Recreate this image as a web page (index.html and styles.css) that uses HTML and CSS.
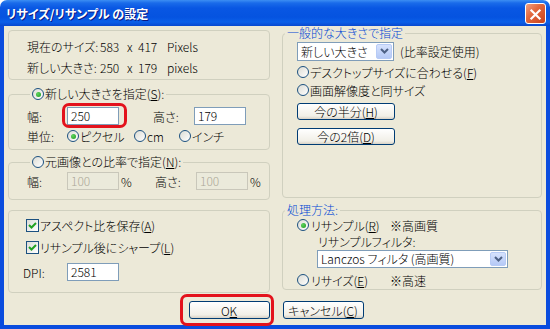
FILE: index.html
```html
<!DOCTYPE html>
<html lang="ja">
  <head>
    <meta charset="UTF-8" />
    <title>リサイズ/リサンプル の設定</title>
    <link rel="stylesheet" href="styles.css">
  </head>
  <body>
    <div class="window">
      <div class="titlebar">
        <span class="title">リサイズ/リサンプル の設定</span>
        <span class="close">
          <svg viewBox="0 0 21 21" width="21" height="21">
            <path d="M6 6 L15 15 M15 6 L6 15" stroke="#fff" stroke-width="2.4" stroke-linecap="square"/>
          </svg>
        </span>
      </div>

      <div class="client">
        <div class="columns">
          <!-- left column -->
          <div class="col">
            <div class="box info">
              <div class="info-row">
                <span class="info-label">現在のサイズ:</span><span class="n1">583</span><span class="x">x</span><span class="n2">417</span><span>Pixels</span>
              </div>
              <div class="info-row">
                <span class="info-label">新しい大きさ:</span><span class="n1">250</span><span class="x">x</span><span class="n2">179</span><span>pixels</span>
              </div>
            </div>

            <div class="group g-new">
              <div class="legend legend-left"><span class="radio on"></span>新しい大きさを指定(<u>S</u>):</div>
              <div class="row first">
                <span class="lbl">幅:</span>
                <span class="mark mark-edit"><span class="edit">250</span></span>
                <span class="lbl lbl-h">高さ:</span>
                <span class="edit">179</span>
              </div>
              <div class="row">
                <span class="lbl">単位:</span>
                <span class="opt opt-px"><span class="radio on"></span>ピクセル</span>
                <span class="opt opt-cm"><span class="radio"></span>cm</span>
                <span class="opt"><span class="radio"></span>インチ</span>
              </div>
            </div>

            <div class="group g-ratio">
              <div class="legend legend-left"><span class="radio"></span>元画像との比率で指定(<u>N</u>):</div>
              <div class="row first">
                <span class="lbl">幅:</span>
                <span class="edit off">100</span>
                <span class="pct">%</span>
                <span class="lbl lbl-h2">高さ:</span>
                <span class="edit off">100</span>
                <span class="pct">%</span>
              </div>
            </div>

            <div class="box opts">
              <div class="row"><span class="check"><svg viewBox="0 0 11 11" width="11" height="11"><path d="M2 5 L4.5 7.5 L9 3" fill="none" stroke="#21a121" stroke-width="2"/></svg></span>アスペクト比を保存(<u>A</u>)</div>
              <div class="row gap2"><span class="check"><svg viewBox="0 0 11 11" width="11" height="11"><path d="M2 5 L4.5 7.5 L9 3" fill="none" stroke="#21a121" stroke-width="2"/></svg></span>リサンプル後にシャープ(<u>L</u>)</div>
              <div class="row gap5">
                <span class="lbl lbl-dpi">DPI:</span>
                <span class="edit">2581</span>
              </div>
            </div>
          </div>

          <!-- right column -->
          <div class="col">
            <div class="group g-size">
              <div class="legend legend-right">一般的な大きさで指定</div>
              <div class="row combo-row">
                <span class="combo combo-size"><span class="combo-text">新しい大きさ</span><span class="combo-btn"><svg viewBox="0 0 9 6" width="9" height="6"><path d="M1 1 L4.5 4.5 L8 1" fill="none" stroke="#4d6185" stroke-width="2"/></svg></span></span>
                <span class="note">(比率設定使用)</span>
              </div>
              <div class="row radio-row first-radio"><span class="radio"></span>デスクトップサイズに合わせる(<u>F</u>)</div>
              <div class="row radio-row"><span class="radio"></span>画面解像度と同サイズ</div>
              <div class="btn btn-wide half">今の半分(<u>H</u>)</div>
              <div class="btn btn-wide double">今の2倍(<u>D</u>)</div>
            </div>

            <div class="group g-method">
              <div class="legend legend-right">処理方法:</div>
              <div class="row small"><span class="radio on"></span><span class="mlabel">リサンプル(<u>R</u>)</span>※高画質</div>
              <div class="row small filter-label">リサンプルフィルタ:</div>
              <span class="combo combo-filter"><span class="combo-text">Lanczos フィルタ (高画質)</span><span class="combo-btn"><svg viewBox="0 0 9 6" width="9" height="6"><path d="M1 1 L4.5 4.5 L8 1" fill="none" stroke="#4d6185" stroke-width="2"/></svg></span></span>
              <div class="row small resize-row"><span class="radio"></span><span class="mlabel">リサイズ(<u>E</u>)</span>※高速</div>
            </div>
          </div>
        </div>

        <div class="buttons">
          <span class="mark mark-ok"><span class="btn">O<u>K</u></span></span>
          <span class="btn">キャンセル(<u>C</u>)</span>
        </div>
      </div>
    </div>
  </body>
</html>
```

FILE: styles.css
```css
html, body {
  margin: 0;
  background: #ffffff;
}
body {
  font-family: "Noto Sans CJK JP", sans-serif;
  font-size: 12px;
  font-weight: 300;
  font-feature-settings: "palt";
  color: #000;
}
u {
  text-decoration-thickness: 1px;
  text-underline-offset: 1px;
}
.window {
  width: 550px;
  height: 329px;
  display: flex;
  flex-direction: column;
}
.titlebar {
  height: 26px;
  flex: none;
  box-sizing: border-box;
  display: flex;
  align-items: center;
  justify-content: space-between;
  padding: 0 4px 0 6px;
  border-radius: 7px 7px 0 0;
  background: linear-gradient(#3c8ef3 0, #1a6bea 3px, #0957e3 8px, #0553e0 17px, #0b5fe8 22px, #0848cf 26px);
}
.title {
  color: #fff;
  font-weight: bold;
  font-size: 12px;
  text-shadow: 1px 1px #0a1883;
}
.close {
  width: 21px;
  height: 21px;
  box-sizing: border-box;
  border: 1px solid #fff;
  border-radius: 3px;
  background: linear-gradient(135deg, #f0a084 0%, #e2693f 40%, #c8421d 100%);
  display: flex;
}
.client {
  flex: 1;
  background: #ece9d8;
  border: 4px solid #0a4cde;
  border-top: 0;
  padding: 4px 4px 0;
  display: flex;
  flex-direction: column;
}
.columns {
  display: grid;
  grid-template-columns: 262px 260px;
  column-gap: 12px;
  align-items: start;
}
.col {
  display: flex;
  flex-direction: column;
}

/* boxes and group boxes */
.box, .group {
  border: 1px solid #d0d0bf;
  border-radius: 4px;
  box-sizing: border-box;
}
.legend {
  display: flex;
  align-items: center;
  width: max-content;
  height: 14px;
  line-height: 14px;
  margin-top: -8px;
  padding: 0 2px;
  background: #ece9d8;
}
.legend-left {
  margin-left: 3px;
}
.legend-right {
  margin-left: -12px;
  color: #0046d5;
}
.row {
  display: flex;
  align-items: center;
  height: 20px;
  white-space: nowrap;
}

/* info box */
.info {
  height: 50px;
  padding: 5px 0 0 18px;
}
.info-row {
  display: flex;
  line-height: 21px;
}
.info-label { width: 73px; flex: none; }
.n1 { width: 27px; }
.x { width: 11px; }
.n2 { width: 29px; }

/* new size group */
.g-new {
  margin-top: 14px;
  padding: 0 0 3px 18px;
}
.g-new .first { margin-top: 5px; }
.lbl { width: 40px; flex: none; }
.lbl-h { width: 41px; margin-left: 34px; }
.lbl-h2 { width: 41px; margin-left: 24px; }
.edit {
  display: inline-block;
  box-sizing: border-box;
  width: 52px;
  height: 18px;
  line-height: 16px;
  padding: 0 3px;
  border: 1px solid #7f9db9;
  background: #fff;
}
.edit.off {
  background: #ebeadb;
  border-color: #c9c7ba;
  color: #aca899;
}
.pct {
  width: 10px;
  margin-left: 2px;
}
.opt {
  display: flex;
  align-items: center;
}
.opt-px { width: 67px; }
.opt-cm { width: 45px; }

/* ratio group */
.g-ratio {
  margin-top: 12px;
  padding: 0 0 8px 18px;
}
.g-ratio .first { margin-top: 2px; }

/* options box */
.opts {
  margin-top: 10px;
  padding: 4px 0 10px 17px;
}
.gap2 { margin-top: 2px; }
.gap5 { margin-top: 5px; }
.lbl-dpi { width: 44px; margin-left: -3px; }

/* radio / check */
.radio {
  width: 12px;
  height: 12px;
  box-sizing: border-box;
  border: 1px solid #1c5180;
  border-radius: 50%;
  background: linear-gradient(135deg, #dcdcd4, #fff);
  margin-right: 1px;
  display: flex;
  align-items: center;
  justify-content: center;
  flex: none;
}
.radio.on::after {
  content: "";
  width: 5px;
  height: 5px;
  border-radius: 50%;
  background: radial-gradient(circle at 35% 35%, #5fd35f, #1d9a1d);
}
.check {
  width: 13px;
  height: 13px;
  box-sizing: border-box;
  border: 1px solid #1c5180;
  background: linear-gradient(135deg, #dcdcd7, #fff);
  margin-right: 1px;
  display: flex;
  flex: none;
}

/* right: general size group */
.g-size {
  margin-top: 3px;
  height: 165px;
  padding-left: 14px;
}
.combo-row { margin-top: 1px; }
.combo {
  display: flex;
  box-sizing: border-box;
  height: 19px;
  border: 1px solid #7f9db9;
  background: #fff;
  padding: 1px;
}
.combo-size { width: 97px; }
.combo-text {
  flex: 1;
  line-height: 15px;
  padding-left: 2px;
  white-space: nowrap;
}
.combo-btn {
  width: 16px;
  border-radius: 2px;
  background: linear-gradient(#d6e2fd, #b5c9f6);
  border: 1px solid #b7cbf6;
  box-sizing: border-box;
  display: flex;
  align-items: center;
  justify-content: center;
}
.note { margin-left: 6px; }
.radio-row { height: 18px; }
.first-radio { margin-top: 2px; }
.btn {
  display: inline-flex;
  align-items: center;
  justify-content: center;
  box-sizing: border-box;
  width: 81px;
  height: 18px;
  border: 1px solid #003c74;
  border-radius: 3px;
  background: linear-gradient(#ffffff, #f1efe7 80%, #d8d2c6);
  white-space: nowrap;
}
.btn-wide {
  display: flex;
  width: 98px;
  height: 17px;
}
.half { margin-top: 4px; }
.double { margin-top: 8px; }

/* right: method group */
.g-method {
  margin-top: 12px;
  padding: 0 0 1px 14px;
}
.small { height: 16px; }
.mlabel { width: 79px; margin-left: 1px; }
.filter-label { padding-left: 21px; }
.combo-filter {
  width: 191px;
  height: 18px;
  margin: 1px 0 0 20px;
}
.combo-filter .combo-text { line-height: 14px; }
.resize-row { margin-top: 4px; }

/* bottom buttons */
.buttons {
  display: flex;
  justify-content: center;
  gap: 13px;
  margin-top: 8px;
  padding-left: 2px;
}

/* red highlight rings drawn over controls */
.mark {
  position: relative;
  display: inline-flex;
}
.mark::after {
  content: "";
  position: absolute;
  border: 3px solid #e3121c;
  border-radius: 7px;
}
.mark-edit::after { inset: -4px -8px -3px -5px; }
.mark-ok::after { inset: -7px -4px -7px -9px; }
```
